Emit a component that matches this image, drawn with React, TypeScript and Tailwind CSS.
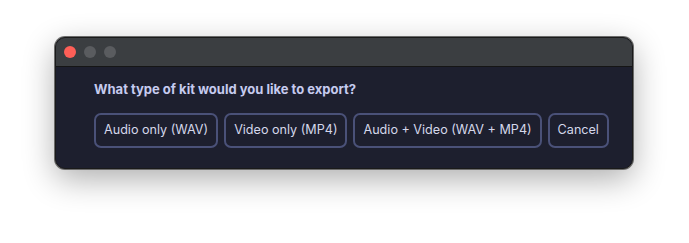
export default function App() {
  const btn =
    "h-[35px] rounded-[7px] border-2 border-[#4a5178] bg-[#1d1f2e] px-[8px] text-[12.6px] text-[#d4d7ea] leading-none";
  return (
    <div className="w-[689px] h-[243px] bg-white pt-[37px] pl-[55px]" style={{ fontFamily: "Inter, 'Noto Sans', sans-serif" }}>
      <div className="w-[578px] h-[132px] rounded-[10px] border border-[#1a1a1a] bg-[#1d1f2e] overflow-hidden shadow-[0_0_0_1px_#6b6b6b,0_10px_32px_rgba(0,0,0,0.32)] flex flex-col">
        <div className="h-[29px] bg-[#3b3e41] border-b border-[#151515] flex items-center gap-[8px] pl-[8px]">
          <div className="w-[12px] h-[12px] rounded-full bg-[#fe5f57]" />
          <div className="w-[12px] h-[12px] rounded-full bg-[#5a5c5f]" />
          <div className="w-[12px] h-[12px] rounded-full bg-[#5a5c5f]" />
        </div>
        <div className="pl-[38px] pt-[14px]">
          <div className="text-[13px] font-bold text-[#c6cbef] leading-[16px]">What type of kit would you like to export?</div>
          <div className="flex gap-[6px] mt-[16px]">
            <button className={btn}>Audio only (WAV)</button>
            <button className={btn}>Video only (MP4)</button>
            <button className={btn}>Audio + Video (WAV + MP4)</button>
            <button className={btn}>Cancel</button>
          </div>
        </div>
      </div>
    </div>
  );
}
